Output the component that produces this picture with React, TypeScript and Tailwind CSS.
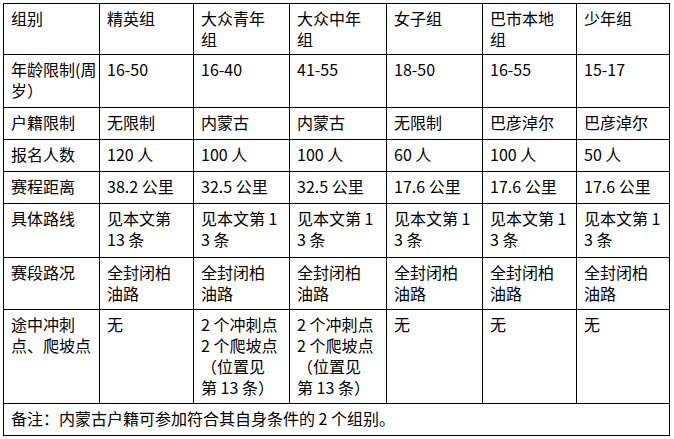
import React from 'react';

type Row = { cells: string[][] };

// each cell is a list of lines, breaks kept as in the source document
const rows: Row[] = [
  { cells: [['组别'], ['精英组'], ['大众青年', '组'], ['大众中年', '组'], ['女子组'], ['巴市本地', '组'], ['少年组']] },
  { cells: [['年龄限制(周', '岁）'], ['16-50'], ['16-40'], ['41-55'], ['18-50'], ['16-55'], ['15-17']] },
  { cells: [['户籍限制'], ['无限制'], ['内蒙古'], ['内蒙古'], ['无限制'], ['巴彦淖尔'], ['巴彦淖尔']] },
  { cells: [['报名人数'], ['120 人'], ['100 人'], ['100 人'], ['60 人'], ['100 人'], ['50 人']] },
  { cells: [['赛程距离'], ['38.2 公里'], ['32.5 公里'], ['32.5 公里'], ['17.6 公里'], ['17.6 公里'], ['17.6 公里']] },
  {
    cells: [
      ['具体路线'],
      ['见本文第', '13 条'],
      ['见本文第 1', '3 条'],
      ['见本文第 1', '3 条'],
      ['见本文第 1', '3 条'],
      ['见本文第 1', '3 条'],
      ['见本文第 1', '3 条'],
    ],
  },
  {
    cells: [
      ['赛段路况'],
      ['全封闭柏', '油路'],
      ['全封闭柏', '油路'],
      ['全封闭柏', '油路'],
      ['全封闭柏', '油路'],
      ['全封闭柏', '油路'],
      ['全封闭柏', '油路'],
    ],
  },
  {
    cells: [
      ['途中冲刺', '点、爬坡点'],
      ['无'],
      ['2 个冲刺点', '2 个爬坡点', '（位置见', '第 13 条）'],
      ['2 个冲刺点', '2 个爬坡点', '（位置见', '第 13 条）'],
      ['无'],
      ['无'],
      ['无'],
    ],
  },
];

const cellCls = 'border-r border-b border-black pl-[7px] pt-[4px] whitespace-nowrap overflow-hidden';

export default function App() {
  return (
    <div className="min-h-screen bg-white text-black font-['Noto_Sans_CJK_SC',sans-serif] text-[16px] leading-[21px]">
      <div className="ml-[3px] pt-[3px]">
        <div className="grid w-fit grid-cols-[96px_94px_96px_97px_96px_94px_93px] grid-rows-[51px_53px_32px_32px_32px_54px_52px_94px_32px] border-l border-t border-black">
          {rows.map((row, ri) =>
            row.cells.map((lines, ci) => (
              <div key={`${ri}-${ci}`} className={cellCls}>
                <p>
                  {lines.map((line, li) => (
                    <React.Fragment key={li}>
                      {li > 0 && <br />}
                      {line}
                    </React.Fragment>
                  ))}
                </p>
              </div>
            ))
          )}
          {/* footnote row spans the whole table */}
          <div className={`${cellCls} col-span-7`}>
            <p>备注：内蒙古户籍可参加符合其自身条件的 2 个组别。</p>
          </div>
        </div>
      </div>
    </div>
  );
}
